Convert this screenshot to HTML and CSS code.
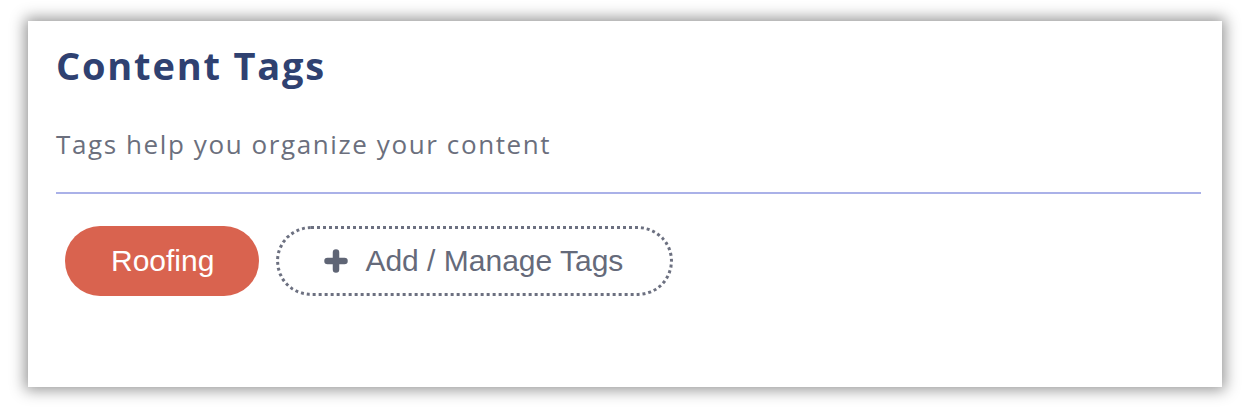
FILE: index.html
```html
<!DOCTYPE html>
<html>
<head>
  <title>Content Tags</title>
  <link rel="stylesheet" href="styles.css">
</head>
<body>
  <div class="card">
    <h1 class="card-title">Content Tags</h1>
    <p class="card-subtitle">Tags help you organize your content</p>

    <div class="tag-list">
      <span class="tag">Roofing</span>
      <button class="tag-add">
        <svg class="plus" width="24" height="24" viewBox="0 0 24 24">
          <path d="M12 3.5v17M3.5 12h17" stroke="currentColor" stroke-width="6.5" stroke-linecap="round" fill="none"/>
        </svg>
        Add / Manage Tags
      </button>
    </div>
  </div>
</body>
</html>
```

FILE: styles.css
```css
body {
  margin: 0;
  padding: 21px 24px 21px 28px;
  background: #fff;
}

.card {
  height: 366px;
  box-sizing: border-box;
  padding: 0 21px 0 28px;
  background: #fff;
  box-shadow: 0 0 14px 3px rgba(0, 0, 0, 0.42);
}

.card-title {
  margin: 0;
  padding-top: 21px;
  font-family: "Open Sans", sans-serif;
  font-weight: 700;
  font-size: 38px;
  line-height: 47px;
  letter-spacing: 1.8px;
  color: #2f4171;
}

.card-subtitle {
  margin: 0;
  padding: 39px 0 31px;
  font-family: "Open Sans", sans-serif;
  font-weight: 400;
  font-size: 26px;
  line-height: 33px;
  letter-spacing: 1.6px;
  color: #6b6f7d;
  border-bottom: 2px solid #aab1e8;
}

.tag-list {
  display: flex;
  align-items: center;
  gap: 17px;
  margin-top: 32px;
  padding-left: 9px;
}

.tag {
  display: inline-flex;
  align-items: center;
  height: 70px;
  padding: 0 45px 0 46px;
  border-radius: 35px;
  background: #d9634f;
  color: #fff;
  font-family: "Liberation Sans", Arial, sans-serif;
  font-size: 30px;
}

.tag-add {
  display: inline-flex;
  align-items: center;
  gap: 17px;
  height: 70px;
  padding: 0 47px 0 45px;
  border: 3px dotted #6c7080;
  border-radius: 35px;
  background: #fff;
  color: #656a7a;
  font-family: "Liberation Sans", Arial, sans-serif;
  font-size: 30px;
  cursor: pointer;
}

.plus {
  color: #5f6575;
}
```
